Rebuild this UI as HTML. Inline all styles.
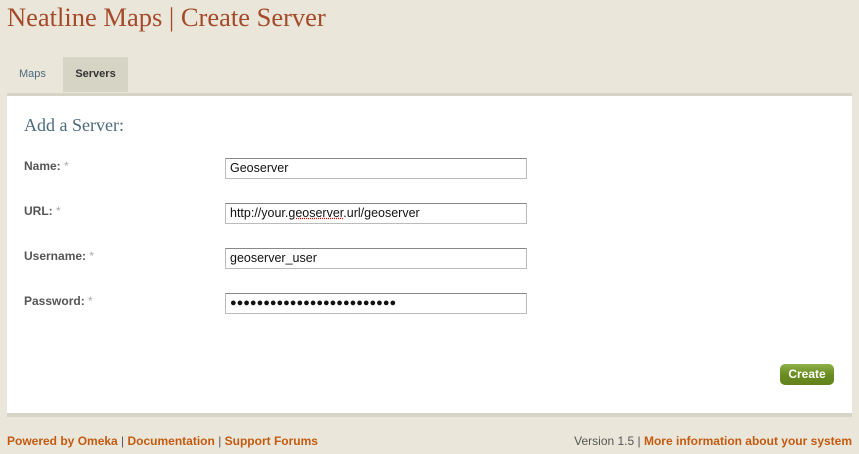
<!DOCTYPE html>
<html><head><style>
body{margin:0;width:859px;height:454px;background:#eae7da;font-family:"Liberation Sans",sans-serif;position:relative;overflow:hidden}
h1{position:absolute;left:7px;top:2px;margin:0;font:26.5px "Liberation Serif",serif;color:#a44a2a;white-space:nowrap}
.tab{position:absolute;top:57px;height:35px;line-height:34px;font-size:11px}
.panel{position:absolute;left:7px;top:93px;width:845px;height:317px;background:#fff;border-top:3px solid #d6d5c5;border-bottom:4px solid #d6d5c5}
h2{position:absolute;left:17px;top:19px;margin:0;font:18px "Liberation Serif",serif;color:#4d6a7e}
.lbl{position:absolute;left:17px;font-size:12px;font-weight:bold;color:#555}
.lbl span{color:#aaa;font-weight:normal}
.in{position:absolute;left:218px;width:296px;height:19px;border:1px solid #bbb;border-top-color:#888;font-size:12.5px;line-height:19px;padding-left:4px;color:#111;box-sizing:content-box}
.btn{position:absolute;left:773px;top:268px;width:54px;height:21px;border-radius:5px;background:linear-gradient(#8fb04a,#6b8c22 50%,#62821c);color:#fff;font-size:12px;font-weight:bold;text-align:center;line-height:21px}
.f{position:absolute;top:434px;font-size:12px;color:#c45a10;font-weight:bold;white-space:nowrap}
.f b{font-weight:normal;color:#555}
</style></head><body>
<h1>Neatline Maps | Create Server</h1>
<div class="tab" style="left:19px;color:#4d6a7e">Maps</div>
<div class="tab" style="left:63px;width:65px;background:#d6d5c5;text-align:center;font-weight:bold;color:#333">Servers</div>
<div class="panel">
<h2>Add a Server:</h2>
<div class="lbl" style="top:63px">Name: <span>*</span></div>
<div class="in" style="top:62px">Geoserver</div>
<div class="lbl" style="top:108px">URL: <span>*</span></div>
<div class="in" style="top:107px">http://your.<span style="text-decoration:underline dotted red">geoserver</span>.url/geoserver</div>
<div class="lbl" style="top:153px">Username: <span>*</span></div>
<div class="in" style="top:152px">geoserver_user</div>
<div class="lbl" style="top:198px">Password: <span>*</span></div>
<div class="in" style="top:197px;font-size:11px;letter-spacing:0">●●●●●●●●●●●●●●●●●●●●●●●●●</div>
<div class="btn">Create</div>
</div>
<div class="f" style="left:7px">Powered by Omeka <b>|</b> Documentation <b>|</b> Support Forums</div>
<div class="f" style="right:7px"><b>Version 1.5 |</b> More information about your system</div>
</body></html>
